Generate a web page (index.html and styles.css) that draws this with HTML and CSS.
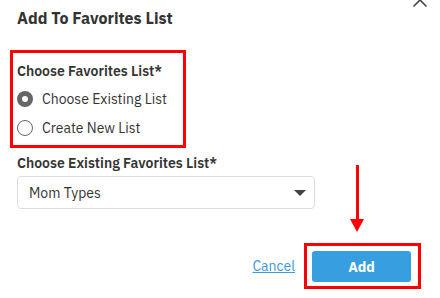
FILE: index.html
```html
<!DOCTYPE html>
<html lang="en">
<head>
  <meta charset="UTF-8">
  <title>Add To Favorites List</title>
  <link rel="stylesheet" href="styles.css">
</head>
<body>

<div class="dialog">
  <button class="close" aria-label="Close">
    <svg width="16" height="16" viewBox="0 0 16 16"><path d="M1.5 1.5 L14.5 14.5 M14.5 1.5 L1.5 14.5" stroke="#444" stroke-width="1.6" fill="none"/></svg>
  </button>

  <h2 class="title">Add To Favorites List</h2>

  <fieldset class="choice highlight">
    <legend>Choose Favorites List*</legend>
    <label class="radio">
      <span class="dot checked"></span>
      Choose Existing List
    </label>
    <label class="radio">
      <span class="dot"></span>
      Create New List
    </label>
  </fieldset>

  <div class="field">
    <div class="field-label">Choose Existing Favorites List*</div>
    <div class="select">
      <span>Mom Types</span>
      <span class="caret"></span>
    </div>
  </div>

  <div class="actions">
    <a href="#" class="cancel">Cancel</a>
    <div class="highlight add-wrap">
      <button class="add">Add</button>
    </div>
  </div>

  <div class="arrow"></div>
</div>

</body>
</html>
```

FILE: styles.css
```css
/* dialog */
body {
  margin: 0;
  font-family: "IBM Plex Sans", "Noto Sans", sans-serif;
  color: #333;
  background-color: #fff;
}
.dialog {
  position: relative;
  width: 440px;
  height: 298px;
  box-sizing: border-box;
  padding: 8px 19px 0 17px;
  overflow: hidden;
}
.close {
  position: absolute;
  top: -8px;
  right: 12px;
  border: none;
  background: none;
  padding: 0;
}
.title {
  font-size: 16px;
  font-weight: bold;
  line-height: 20px;
  margin: 0;
  color: #333;
}
.highlight {
  border: 3px solid #f00;
}
.choice {
  margin: 22px 0 0 -7px;
  padding: 8px 4px 3px 4px;
  width: 176px;
  box-sizing: border-box;
}
.choice legend {
  float: left;
  padding: 0;
  font-size: 14px;
  font-weight: 600;
  line-height: 20px;
  margin-bottom: 3px;
}
.radio {
  clear: both;
  display: flex;
  align-items: center;
  gap: 9px;
  font-size: 14px;
  line-height: 20px;
  height: 29px;
}
.dot {
  width: 16px;
  height: 16px;
  box-sizing: border-box;
  border: 1px solid #666;
  border-radius: 50%;
  background-color: #fff;
}
.dot.checked {
  border: 5px solid #666;
}
.field {
  margin-top: 5px;
}
.field-label {
  font-size: 14px;
  font-weight: 600;
  line-height: 20px;
}
.select {
  margin-top: 3px;
  width: 298px;
  height: 33px;
  box-sizing: border-box;
  border: 1px solid #ddd;
  border-radius: 4px;
  display: flex;
  align-items: center;
  justify-content: space-between;
  padding: 0 8px 0 11px;
  font-size: 14px;
}
.caret {
  width: 0;
  height: 0;
  border-left: 6px solid transparent;
  border-right: 6px solid transparent;
  border-top: 6px solid #444;
}
.actions {
  margin-top: 34px;
  display: flex;
  justify-content: flex-end;
  align-items: center;
  gap: 9px;
}
.cancel {
  color: #3b9ae1;
  font-size: 14px;
  text-decoration: underline;
}
.add-wrap {
  padding: 5px 7px 4px 5px;
}
.add {
  display: block;
  width: 99px;
  height: 31px;
  border: none;
  border-radius: 3px;
  background-color: #379ee0;
  color: #fff;
  font-family: inherit;
  font-size: 14px;
  font-weight: bold;
}
/* annotation arrow */
.arrow {
  position: absolute;
  left: 356px;
  top: 165px;
  width: 3px;
  height: 56px;
  background-color: #f00;
}
.arrow::after {
  content: "";
  position: absolute;
  left: -6px;
  top: 54px;
  border-left: 7.5px solid transparent;
  border-right: 7.5px solid transparent;
  border-top: 13px solid #f00;
}
```
